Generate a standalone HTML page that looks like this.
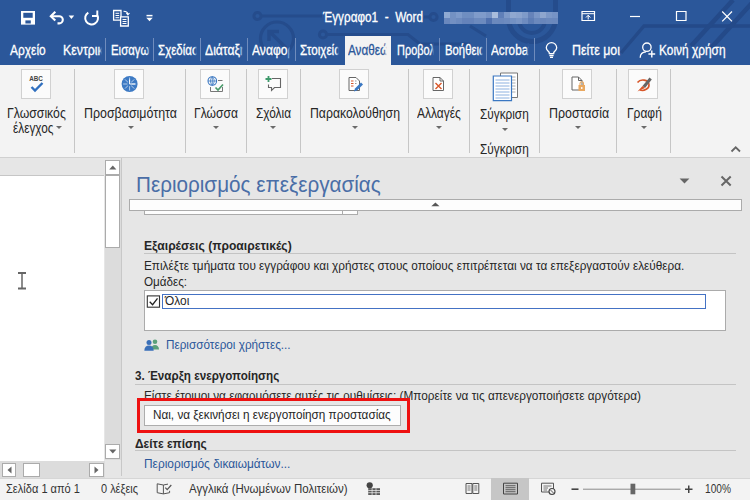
<!DOCTYPE html>
<html>
<head>
<meta charset="utf-8">
<style>
html,body{margin:0;padding:0;}
body{width:750px;height:500px;overflow:hidden;position:relative;background:#e6e6e6;font-family:"Liberation Sans",sans-serif;font-size:12.5px;color:#262626;}
.abs{position:absolute;}
.t{position:absolute;white-space:nowrap;line-height:1;transform-origin:0 0;display:inline-block;}
.clip{position:absolute;overflow:hidden;white-space:nowrap;line-height:1;}
.clip span{display:inline-block;transform-origin:0 0;white-space:nowrap;}
.tab{font-size:14.5px;color:#fff;top:42.7px;-webkit-text-stroke:.3px #fff;}
.ctab{top:42.7px;height:17px;font-size:14.5px;color:#fff;-webkit-text-stroke:.3px currentColor;}
.ctab:after{content:"";position:absolute;right:0;top:0;width:3px;height:100%;background:linear-gradient(to right,rgba(43,87,154,0),rgba(43,87,154,1));}
.tsep{position:absolute;top:38px;width:1px;height:23px;background:#6f8cbd;}
.rsep{position:absolute;top:69px;width:1px;height:84px;background:#c6c6c6;}
.rl{font-size:14px;color:#262626;top:105.600px;}
.ib{position:absolute;top:69px;width:30px;height:30px;background:#fbfbfb;border:1px solid #d1d1d1;box-sizing:border-box;}
.dd{position:absolute;width:0;height:0;border-left:3px solid transparent;border-right:3px solid transparent;border-top:3px solid #6a6a6a;}
.b{font-size:12.5px;color:#262626;}
.bb{font-size:12.5px;color:#262626;font-weight:bold;}
.lnk{font-size:12.5px;color:#2b579a;}
.hl{position:absolute;height:1px;background:#c4c4c4;}
.st{font-size:12px;color:#333;top:482.700px;}
.sbtn{position:absolute;background:#fff;border:1px solid #ababab;box-sizing:border-box;}
</style>
</head>
<body>
<!-- ===== title + tabs ===== -->
<div class="abs" style="left:0;top:0;width:750px;height:65px;background:#2b579a;"></div>
<svg class="abs" style="left:0;top:0;" width="750" height="65" viewBox="0 0 750 65" fill="none" stroke="#254c8c" stroke-width="3">
  <circle cx="257.5" cy="16" r="3.6"/>
  <path d="M261.5 16H322"/>
  <path d="M424 17H430"/>
  <circle cx="433.5" cy="17" r="3.6"/>
  <circle cx="277" cy="38.5" r="16.5" stroke-width="3.2"/>
  <path d="M286 48L270 32M269 41V31.5H279" stroke-width="3.4"/>
  <circle cx="323" cy="34.5" r="3.6"/>
  <path d="M327 34.5H408L420 44H470"/>
  <path d="M470 26L486 36"/>
  <path d="M508.5 0V18a23.5 23.5 0 0 0 47 0V0" stroke-width="5"/>
  <path d="M519 12V20a13 13 0 0 0 26 0V12" stroke-width="4"/>
  <path d="M750 26H644L621 53" stroke="#244a89" stroke-width="3.400"/>
  <path d="M733 0L691 46M752 3L710 49" stroke="#244a89" stroke-width="4.600"/>
</svg>
<!-- pixelated user name -->
<svg class="abs" style="left:0;top:0;" width="750" height="30" viewBox="0 0 750 30" shape-rendering="crispEdges"><rect x="443.70" y="11.9" width="6.07" height="6.1" fill="#8faad2"/><rect x="443.70" y="18" width="6.07" height="6" fill="#6a88bd"/><rect x="449.72" y="11.9" width="6.07" height="6.1" fill="#7391c3"/><rect x="449.72" y="18" width="6.07" height="6" fill="#7390c2"/><rect x="455.73" y="11.9" width="6.07" height="6.1" fill="#7d9aca"/><rect x="455.73" y="18" width="6.07" height="6" fill="#6d8bbf"/><rect x="461.75" y="11.9" width="6.07" height="6.1" fill="#6f8ec1"/><rect x="461.75" y="18" width="6.07" height="6" fill="#6583ba"/><rect x="467.76" y="11.9" width="6.07" height="6.1" fill="#6f8ec1"/><rect x="467.76" y="18" width="6.07" height="6" fill="#6583ba"/><rect x="473.78" y="11.9" width="6.07" height="6.1" fill="#7f9bca"/><rect x="473.78" y="18" width="6.07" height="6" fill="#6c8abe"/><rect x="479.79" y="11.9" width="6.07" height="6.1" fill="#7f9bca"/><rect x="479.79" y="18" width="6.07" height="6" fill="#6c8abe"/><rect x="485.81" y="11.9" width="6.07" height="6.1" fill="#7592c4"/><rect x="485.81" y="18" width="6.07" height="6" fill="#4f70ae"/><rect x="491.83" y="11.9" width="6.07" height="6.1" fill="#a9bddc"/><rect x="491.83" y="18" width="6.07" height="6" fill="#6b89bd"/><rect x="497.84" y="11.9" width="6.07" height="6.1" fill="#5f7fb8"/><rect x="497.84" y="18" width="6.07" height="6" fill="#6a88bd"/><rect x="503.86" y="11.9" width="6.07" height="6.1" fill="#7d99c8"/><rect x="503.86" y="18" width="6.07" height="6" fill="#6d8bbf"/><rect x="509.87" y="11.9" width="6.07" height="6.1" fill="#90a8d0"/><rect x="509.87" y="18" width="6.07" height="6" fill="#7391c3"/><rect x="515.89" y="11.9" width="6.07" height="6.1" fill="#8ba4ce"/><rect x="515.89" y="18" width="6.07" height="6" fill="#7a96c6"/><rect x="521.91" y="11.9" width="6.07" height="6.1" fill="#7f9bc9"/><rect x="521.91" y="18" width="6.07" height="6" fill="#6e8cc0"/><rect x="527.92" y="11.9" width="6.07" height="6.1" fill="#6683b9"/><rect x="527.92" y="18" width="6.07" height="6" fill="#5d7db5"/><rect x="533.94" y="11.9" width="6.07" height="6.1" fill="#7a96c6"/><rect x="533.94" y="18" width="6.07" height="6" fill="#6b89bd"/><rect x="539.95" y="11.9" width="6.07" height="6.1" fill="#8ea6ce"/><rect x="539.95" y="18" width="6.07" height="6" fill="#6886bb"/><rect x="545.97" y="11.9" width="6.07" height="6.1" fill="#7c98c7"/><rect x="545.97" y="18" width="6.07" height="6" fill="#6b89bd"/><rect x="551.98" y="11.9" width="6.07" height="6.1" fill="#7693c5"/><rect x="551.98" y="18" width="6.07" height="6" fill="#6a88bd"/></svg>

<!-- QAT icons -->
<svg class="abs" style="left:0;top:0;" width="170" height="36" viewBox="0 0 170 36" fill="none" stroke="#fff" stroke-width="1.6">
  <!-- save -->
  <path d="M21 11H35V24.600H21Z" fill="#fff" stroke="none"/>
  <path d="M23.300 12.800H32.700V17.800H23.300Z" fill="#2b579a" stroke="none"/>
  <path d="M25.400 20.400H30.800V23.500H25.400Z" fill="#2b579a" stroke="none"/>
  <!-- undo -->
  <path d="M55.300 11.800L50.800 16.200L55.300 20.600" stroke-width="2.100"/>
  <path d="M51.200 16.200H59.200a3.600 3.600 0 0 1 0 7.200H57.500" stroke-width="2.100"/>
  <path d="M68.600 15.500H74.200L71.400 18.900Z" fill="#fff" stroke="none"/>
  <!-- redo -->
  <path d="M88.300 12.600a6.400 6.400 0 1 0 8.600 1.900" stroke-width="2"/>
  <path d="M97.300 10.600V16H92" stroke-width="1.900"/>
  <!-- doc copy -->
  <path d="M113.600 10.500H121V20.200H113.600Z" stroke-width="1.300"/>
  <path d="M120.600 16.800H128.300V26H120.600Z" stroke-width="1.300" fill="#2b579a"/>
  <path d="M115.500 13.300H119.200M115.500 15.500H119.200M115.500 17.700H119.200M122.500 19.500H126.500M122.500 21.500H126.500M122.500 23.500H126.500" stroke-width="1"/>
  <path d="M123.500 11.300c2.800 0 4.300 1 4.300 3.200M126.300 13L127.900 14.800L129.500 13" stroke-width="1.100"/>
  <!-- customize -->
  <path d="M146.500 15.600H152.500" stroke-width="1.500"/>
  <path d="M146.300 17.800H152.700L149.500 21.200Z" fill="#fff" stroke="none"/>
</svg>
<div class="t" style="left:323.3px;top:9.8px;font-size:14px;color:#fff;-webkit-text-stroke:.3px #fff;transform:scaleX(0.8396)">Έγγραφο1&nbsp; -&nbsp; Word</div>

<!-- window controls -->
<svg class="abs" style="left:570px;top:0;" width="180" height="36" viewBox="570 0 180 36" fill="none" stroke="#fff" stroke-width="1.2">
  <path d="M582 11.500H594.5V20.500H582Z"/>
  <path d="M582 13.700H594.5" stroke-width="1"/>
  <path d="M588.2 19.5V15.5M586 17.5L588.2 15.2L590.4 17.5" stroke-width="1"/>
  <path d="M630 16.500H640"/>
  <path d="M676.500 11.500H686V20.500H676.500Z"/>
  <path d="M722.200 11.500L732 21.300M732 11.500L722.200 21.300"/>
</svg>

<!-- tabs -->
<div class="t tab" style="left:10px;transform:scaleX(0.8248)">Αρχείο</div>
<div class="clip ctab" style="left:63.4px;width:38.2px;"><span style="transform:scaleX(0.8523)">Κεντρική</span></div>
<div class="tsep" style="left:105px;"></div>
<div class="clip ctab" style="left:110.6px;width:39.2px;"><span style="transform:scaleX(0.7869)">Εισαγωγή</span></div>
<div class="tsep" style="left:153px;"></div>
<div class="clip ctab" style="left:158px;width:38.8px;"><span style="transform:scaleX(0.7959)">Σχεδίαση</span></div>
<div class="tsep" style="left:200px;"></div>
<div class="clip ctab" style="left:205px;width:38.2px;"><span style="transform:scaleX(0.8396)">Διάταξη</span></div>
<div class="tsep" style="left:247px;"></div>
<div class="clip ctab" style="left:252.3px;width:38.2px;"><span style="transform:scaleX(0.8350)">Αναφορές</span></div>
<div class="tsep" style="left:295px;"></div>
<div class="clip ctab" style="left:300px;width:39.2px;"><span style="transform:scaleX(0.8071)">Στοιχεία</span></div>
<div class="abs" style="left:344.500px;top:35.500px;width:46.500px;height:30px;background:#f3f3f3;"></div>
<div class="clip ctab" style="left:348.2px;width:39.2px;color:#2b579a;"><span style="transform:scaleX(0.8085)">Αναθεώρηση</span></div>
<div class="clip ctab" style="left:396.6px;width:37.6px;"><span style="transform:scaleX(0.7549)">Προβολή</span></div>
<div class="tsep" style="left:439px;"></div>
<div class="clip ctab" style="left:445px;width:38.2px;"><span style="transform:scaleX(0.7805)">Βοήθεια</span></div>
<div class="tsep" style="left:486px;"></div>
<div class="clip ctab" style="left:491.4px;width:37.6px;"><span style="transform:scaleX(0.8095)">Acrobat</span></div>
<div class="tsep" style="left:533.5px;"></div>
<svg class="abs" style="left:540px;top:38px;" width="24" height="24" viewBox="540 38 24 24" fill="none" stroke="#fff" stroke-width="1.300">
  <path d="M549.300 53.600V52.800c0-1.300-3-2.200-3-5a5.200 5.200 0 0 1 10.400 0c0 2.800-3 3.700-3 5V53.600Z"/>
  <path d="M549.400 55.500H553.600M550 57.400H553"/>
</svg>
<div class="t tab" style="left:571.800px;transform:scaleX(0.8567)">Πείτε μοι</div>
<svg class="abs" style="left:636px;top:38px;" width="24" height="24" viewBox="636 38 24 24" fill="none" stroke="#fff" stroke-width="1.300">
  <circle cx="646.900" cy="47.200" r="4.200"/>
  <path d="M640.200 57.800c0-3.400 2.300-5.700 5.800-5.900"/>
  <path d="M648.400 54H655.200M651.800 50.600V57.400" stroke-width="1.400"/>
</svg>
<div class="t tab" style="left:659.300px;transform:scaleX(0.8216)">Κοινή χρήση</div>
<style>.ctab[style*="2b579a"]:after{background:linear-gradient(to right,rgba(243,243,243,0),rgba(243,243,243,1));}</style>

<!-- ===== ribbon ===== -->
<div class="abs" style="left:0;top:65px;width:750px;height:92px;background:#f3f3f3;"></div>
<div class="abs" style="left:0;top:156.500px;width:750px;height:1.500px;background:#d0d0d0;"></div>
<div class="rsep" style="left:74px;"></div>
<div class="rsep" style="left:185.200px;"></div>
<div class="rsep" style="left:246.100px;"></div>
<div class="rsep" style="left:300.100px;"></div>
<div class="rsep" style="left:408px;"></div>
<div class="rsep" style="left:469px;"></div>
<div class="rsep" style="left:539px;"></div>
<div class="rsep" style="left:616px;"></div>
<div class="rsep" style="left:670px;"></div>

<!-- 1 spelling -->
<div class="ib" style="left:21px;"></div>
<svg class="abs" style="left:21px;top:69px;" width="30" height="30" viewBox="0 0 30 30" fill="none">
  <text x="15" y="11.800" font-family="Liberation Sans" font-weight="bold" font-size="6.300" text-anchor="middle" fill="#444">ABC</text>
  <path d="M10.500 18L14 21.500L21.500 14" stroke="#2f6fbf" stroke-width="2.400"/>
</svg>
<div class="t rl" style="left:7.300px;transform:scaleX(0.8752)">Γλωσσικός</div>
<div class="t rl" style="left:12.500px;top:120.800px;transform:scaleX(0.8438)">έλεγχος</div>
<div class="dd" style="left:55.800px;top:125.900px;"></div>

<!-- 2 accessibility -->
<div class="ib" style="left:114px;"></div>
<svg class="abs" style="left:114px;top:69px;" width="30" height="30" viewBox="0 0 30 30" fill="none">
  <circle cx="15.600" cy="15" r="8" fill="#3d7ac4"/>
  <path d="M15.600 8.500V21.500M9.100 15H22.100M11 10.400L20.200 19.600M20.200 10.400L11 19.600" stroke="#e8f0fa" stroke-width=".7"/>
  <circle cx="15.600" cy="15" r="2.300" fill="#3d7ac4"/>
  <path d="M15.600 15H21M15.600 15V10.500" stroke="#fff" stroke-width="1"/>
</svg>
<div class="t rl" style="left:83.600px;transform:scaleX(0.8874)">Προσβασιμότητα</div>
<div class="dd" style="left:127.800px;top:125.900px;"></div>

<!-- 3 language -->
<div class="ib" style="left:200px;"></div>
<svg class="abs" style="left:200px;top:69px;" width="30" height="30" viewBox="0 0 30 30" fill="none">
  <circle cx="12.300" cy="12" r="4.300" stroke="#3a77c2" stroke-width="1.100"/>
  <path d="M8 12H16.600M12.300 7.700V16.300M12.300 7.700c-2.500 2.500-2.500 6 0 8.600M12.300 7.700c2.500 2.500 2.500 6 0 8.600" stroke="#3a77c2" stroke-width=".8"/>
  <path d="M18 11.500H22.500" stroke="#777" stroke-width="1"/>
  <path d="M10.500 18V22.500H22.500V18" stroke="#777" stroke-width="1"/>
  <path d="M15.500 18.500L18 21L23 15.500" stroke="#4a9a6a" stroke-width="1.700"/>
</svg>
<div class="t rl" style="left:194.400px;transform:scaleX(0.8640)">Γλώσσα</div>
<div class="dd" style="left:213.200px;top:125.900px;"></div>

<!-- 4 comments -->
<div class="ib" style="left:258px;"></div>
<svg class="abs" style="left:258px;top:69px;" width="30" height="30" viewBox="0 0 30 30" fill="none">
  <path d="M14 9.500H22.500V18.500H16.500L13.500 21.500V18.500H10.500V15.500" stroke="#666" stroke-width="1.100"/>
  <path d="M10.500 7V13M7.500 10H13.500" stroke="#3f9a6c" stroke-width="1.800"/>
</svg>
<div class="t rl" style="left:256px;transform:scaleX(0.8462)">Σχόλια</div>
<div class="dd" style="left:270.200px;top:125.900px;"></div>

<!-- 5 tracking -->
<div class="ib" style="left:339px;"></div>
<svg class="abs" style="left:339px;top:69px;" width="30" height="30" viewBox="0 0 30 30" fill="none">
  <path d="M10 8.500H17L20.500 12V21.500H10Z" stroke="#666" stroke-width="1" fill="#fff"/>
  <path d="M12 12H14.500M12 14.500H14.500M12 17H14.500" stroke="#d8572a" stroke-width="1.100"/>
  <path d="M16 12H17.500M16 14.500H17.500" stroke="#999" stroke-width="1"/>
  <path d="M15 22.500L16 19.500L22 13.500L24 15.500L18 21.500Z" fill="#3a77c2"/>
</svg>
<div class="t rl" style="left:309.700px;transform:scaleX(0.8751)">Παρακολούθηση</div>
<div class="dd" style="left:351.600px;top:125.900px;"></div>

<!-- 6 changes -->
<div class="ib" style="left:423px;"></div>
<svg class="abs" style="left:423px;top:69px;" width="30" height="30" viewBox="0 0 30 30" fill="none">
  <path d="M10 8.500H17L20.500 12V21.500H10Z" stroke="#666" stroke-width="1" fill="#fff"/>
  <path d="M17 8.500V12H20.500" stroke="#666" stroke-width="1"/>
  <path d="M12.500 14L18.500 20M18.500 14L12.500 20" stroke="#d8572a" stroke-width="1.400"/>
</svg>
<div class="t rl" style="left:417.400px;transform:scaleX(0.8552)">Αλλαγές</div>
<div class="dd" style="left:436.400px;top:125.900px;"></div>

<!-- 7 compare -->
<svg class="abs" style="left:490px;top:70px;" width="32" height="34" viewBox="490 70 32 34" fill="none">
  <path d="M500.500 73H517.500V97.500H500.500Z" fill="#fff" stroke="#777" stroke-width="1"/>
  <path d="M503 77H515.500M503 80H515.500M503 83H515.500M503 86H515.500M503 89H515.500M503 92H515.500" stroke="#999" stroke-width=".8"/>
  <path d="M493.300 76H511.500V100.700H493.300Z" fill="#fff" stroke="#3a77c2" stroke-width="1.200"/>
  <path d="M495.500 80H509.500M495.500 83H509.500M495.500 86H509.500M495.500 89H509.500M495.500 92H509.500M495.500 95H509.500M495.500 98H509.500" stroke="#7fa8dc" stroke-width=".9"/>
</svg>
<div class="t rl" style="left:480.100px;top:106.900px;transform:scaleX(0.8424)">Σύγκριση</div>
<div class="dd" style="left:501.700px;top:127.900px;"></div>
<div class="t rl" style="left:480.100px;top:141.700px;transform:scaleX(0.8424)">Σύγκριση</div>

<!-- 8 protect -->
<div class="ib" style="left:561.800px;"></div>
<svg class="abs" style="left:561.800px;top:69px;" width="30" height="30" viewBox="0 0 30 30" fill="none">
  <path d="M10 8H16.500L20 11.500V21H10Z" stroke="#666" stroke-width="1" fill="#fff"/>
  <path d="M16.500 8V11.500H20" stroke="#666" stroke-width="1"/>
  <rect x="16.500" y="16" width="6.500" height="6" fill="#e9a860"/>
  <path d="M18 16V14.500a1.750 1.750 0 0 1 3.500 0V16" stroke="#e9a860" stroke-width="1.100"/>
  <circle cx="19.750" cy="19" r=".9" fill="#fff"/>
</svg>
<div class="t rl" style="left:548.500px;transform:scaleX(0.8867)">Προστασία</div>
<div class="dd" style="left:575.400px;top:125.900px;"></div>

<!-- 9 ink -->
<div class="ib" style="left:628px;"></div>
<svg class="abs" style="left:628px;top:69px;" width="30" height="30" viewBox="0 0 30 30" fill="none">
  <path d="M9.500 13.500c3-4 11-3 11.500 2c.5 4-5 7-9 5.500" stroke="#d8572a" stroke-width="1.600"/>
  <path d="M14.500 17L21.500 8.500L23.800 10.500L17 19Z" fill="#666"/>
  <path d="M14.500 17L17 19L9.500 22.500Z" fill="#d8572a"/>
</svg>
<div class="t rl" style="left:626.600px;transform:scaleX(0.8563)">Γραφή</div>
<div class="dd" style="left:640.700px;top:125.900px;"></div>

<svg class="abs" style="left:729px;top:144px;" width="14" height="10" viewBox="0 0 14 10" fill="none"><path d="M2.500 7.500L6.700 3.300L11 7.500" stroke="#666" stroke-width="1.800"/></svg>


<!-- ===== doc area ===== -->
<!-- document page -->
<div class="abs" style="left:0;top:175px;width:104px;height:286px;background:#fff;border-top:1px solid #c6c6c6;box-sizing:border-box;"></div>
<!-- I-beam -->
<svg class="abs" style="left:16px;top:270px;" width="12" height="22" viewBox="16 270 12 22"><path d="M18 273H26M18 288.500H26" stroke="#666" stroke-width="2"/><path d="M22 273V288.500" stroke="#666" stroke-width="1.500"/></svg>
<!-- v scrollbar -->
<div class="abs" style="left:104.500px;top:160px;width:16px;height:299.500px;background:#dcdcdc;"></div>
<div class="sbtn" style="left:104.500px;top:160px;width:15.500px;height:15px;"></div>
<svg class="abs" style="left:104.500px;top:160px;" width="16" height="15" viewBox="0 0 16 15"><path d="M4.200 9.500H11.400L7.800 5.500Z" fill="#666"/></svg>
<div class="sbtn" style="left:104.500px;top:175.300px;width:15.500px;height:73px;"></div>
<div class="sbtn" style="left:104.500px;top:444.300px;width:15.500px;height:14.500px;"></div>
<svg class="abs" style="left:104.500px;top:444.300px;" width="16" height="15" viewBox="0 0 16 15"><path d="M4.200 5.500H11.400L7.800 9.500Z" fill="#666"/></svg>
<!-- h scrollbar -->
<div class="abs" style="left:0;top:461px;width:104.500px;height:16.500px;background:#dcdcdc;"></div>
<div class="sbtn" style="left:1.500px;top:462.500px;width:14.500px;height:14px;"></div>
<svg class="abs" style="left:1.500px;top:462.500px;" width="15" height="14" viewBox="0 0 15 14"><path d="M9.500 3.500V10.500L5.500 7Z" fill="#666"/></svg>
<div class="sbtn" style="left:23.300px;top:462.500px;width:16.300px;height:14px;"></div>
<div class="sbtn" style="left:89.300px;top:462.500px;width:14.500px;height:14px;"></div>
<svg class="abs" style="left:89.300px;top:462.500px;" width="15" height="14" viewBox="0 0 15 14"><path d="M5.500 3.500V10.500L9.500 7Z" fill="#666"/></svg>
<!-- pane divider -->
<div class="abs" style="left:121.300px;top:158px;width:1px;height:318px;background:#c8c8c8;"></div>


<!-- ===== pane ===== -->
<div class="t" style="left:136.200px;top:174px;font-size:22.500px;color:#4a6ea7;transform:scaleX(0.9191)">Περιορισμός επεξεργασίας</div>
<svg class="abs" style="left:676px;top:174px;" width="60" height="14" viewBox="676 174 60 14" fill="none">
  <path d="M679.600 178.500H689.400L684.500 183.500Z" fill="#666"/>
  <path d="M721.500 176.500L730.700 185.500M730.700 176.500L721.500 185.500" stroke="#666" stroke-width="2"/>
</svg>
<!-- inner remnants -->
<div class="abs" style="left:144.300px;top:206px;width:213.500px;height:8.500px;background:#fdfdfd;border:1px solid #ababab;box-sizing:border-box;"></div>
<div class="abs" style="left:342px;top:206px;width:1px;height:8.500px;background:#ababab;"></div>
<!-- scroll-up bar -->
<div class="abs" style="left:129.300px;top:199.300px;width:612.500px;height:11.500px;background:#fdfdfd;border:1px solid #ababab;box-sizing:border-box;"></div>
<svg class="abs" style="left:430px;top:200px;" width="12" height="10" viewBox="430 200 12 10"><path d="M431.300 206.300H439.500L435.400 202.500Z" fill="#555"/></svg>

<div class="t bb" style="left:144.300px;top:239.900px;transform:scaleX(0.9687)">Εξαιρέσεις (προαιρετικές)</div>
<div class="hl" style="left:144.300px;top:253px;width:591.700px;"></div>
<div class="t b" style="left:144.300px;top:260.200px;transform:scaleX(0.9425)">Επιλέξτε τμήματα του εγγράφου και χρήστες στους οποίους επιτρέπεται να τα επεξεργαστούν ελεύθερα.</div>
<div class="t b" style="left:144.300px;top:275.800px;transform:scaleX(0.9332)">Ομάδες:</div>
<div class="abs" style="left:144.300px;top:290.300px;width:581.500px;height:41.200px;background:#fff;border:1px solid #ababab;box-sizing:border-box;"></div>
<div class="abs" style="left:162.300px;top:293.500px;width:543.700px;height:15.800px;background:#fff;border:1px solid #4472c4;box-sizing:border-box;"></div>
<svg class="abs" style="left:146px;top:295px;" width="15" height="14" viewBox="146 295 15 14" fill="none">
  <rect x="147.300" y="295.900" width="12.200" height="11.300" stroke="#333" stroke-width="1.100" fill="#fff"/>
  <path d="M149.700 301.700L152.600 304.700L157.500 298.300" stroke="#222" stroke-width="1.300"/>
</svg>
<div class="t b" style="left:164.800px;top:294.900px;transform:scaleX(0.9535)">Όλοι</div>
<svg class="abs" style="left:143px;top:338px;" width="18" height="14" viewBox="143 338 18 14" fill="none">
  <circle cx="155" cy="341.700" r="2.300" fill="#5aa07a"/>
  <path d="M151 349.500c0-3 1.800-4.500 4-4.500s4 1.500 4 4.500Z" fill="#5aa07a"/>
  <circle cx="149" cy="342.500" r="2.500" fill="#3a6fb8"/>
  <path d="M144.300 350.800c0-3.400 2-5.200 4.700-5.200s4.700 1.800 4.700 5.200Z" fill="#3a6fb8"/>
</svg>
<div class="t lnk" style="left:166px;top:339.200px;transform:scaleX(0.9382)">Περισσότεροι χρήστες...</div>

<div class="t bb" style="left:134.800px;top:370.300px;transform:scaleX(0.9299)">3. Έναρξη ενεργοποίησης</div>
<div class="hl" style="left:134.800px;top:383.800px;width:601.200px;"></div>
<div class="t b" style="left:144.300px;top:390.200px;transform:scaleX(0.9436)">Είστε έτοιμοι να εφαρμόσετε αυτές τις ρυθμίσεις; (Μπορείτε να τις απενεργοποιήσετε αργότερα)</div>
<!-- red highlight (covers part of text line) -->
<div class="abs" style="left:137px;top:397.700px;width:273px;height:35.300px;background:#e6e6e6;border:3px solid #ee1111;box-sizing:border-box;"></div>
<div class="abs" style="left:144.300px;top:405px;width:256.400px;height:21.300px;background:#fdfdfd;border:1px solid #adadad;box-sizing:border-box;"></div>
<div class="t b" style="left:153.100px;top:409.200px;transform:scaleX(0.9387)">Ναι, να ξεκινήσει η ενεργοποίηση προστασίας</div>
<div class="t bb" style="left:134.800px;top:437.500px;transform:scaleX(0.9554)">Δείτε επίσης</div>
<div class="hl" style="left:134.800px;top:450.400px;width:601.200px;"></div>
<div class="t lnk" style="left:144.300px;top:458.300px;transform:scaleX(0.9512)">Περιορισμός δικαιωμάτων...</div>


<!-- ===== status ===== -->
<div class="abs" style="left:0;top:477.500px;width:750px;height:22.500px;background:#f3f3f3;border-top:1px solid #d6d6d6;box-sizing:border-box;"></div>
<div class="abs" style="left:491.300px;top:477.500px;width:37.400px;height:22.500px;background:#c6c6c6;"></div>
<div class="t st" style="left:6px;transform:scaleX(0.9216)">Σελίδα 1 από 1</div>
<div class="t st" style="left:101.400px;transform:scaleX(0.9129)">0 λέξεις</div>
<div class="t st" style="left:189px;transform:scaleX(0.9578)">Αγγλικά (Ηνωμένων Πολιτειών)</div>
<div class="t st" style="left:704.700px;transform:scaleX(0.8468)">100%</div>
<svg class="abs" style="left:150px;top:478px;" width="600" height="22" viewBox="150 478 600 22" fill="none" stroke="#555" stroke-width="1">
  <!-- proofing book -->
  <path d="M157.200 483.800L163.400 485V493.900L157.200 492.700ZM163.400 485L168 484.100M163.400 493.900L169.600 492.700V490.800" stroke-width="1"/>
  <path d="M165.300 487.600L167.200 489.700L171.300 485" stroke-width="1.200"/>
  <!-- macro -->
  <circle cx="369.700" cy="485.300" r="3.100" fill="#444" stroke="none"/>
  <path d="M368.200 488.200H380V495H368.200Z" fill="#5a5a5a" stroke="none"/>
  <path d="M368.200 490.500H380M368.200 492.700H380M372.100 488.200V495M376 488.200V495" stroke="#f3f3f3" stroke-width=".7"/>
  <!-- read mode -->
  <path d="M466 483.500H472V493.500H466ZM472.800 483.500H478.800V493.500H472.800Z"/>
  <path d="M467.500 486H470.500M467.500 488H470.500M467.500 490H470.500M474.300 486H477.300M474.300 488H477.300M474.300 490H477.300" stroke-width=".8"/>
  <!-- print layout -->
  <path d="M503.500 483.200H517.500V494H503.500Z" stroke="#444"/>
  <path d="M505.500 485.700H515.500M505.500 487.700H515.500M505.500 489.700H515.500M505.500 491.700H515.500" stroke="#555" stroke-width=".9"/>
  <!-- web layout -->
  <path d="M541.500 483.200H553.500V492H541.500Z"/>
  <path d="M543.500 486H551.500M543.500 488H548M543.500 490H547" stroke-width=".8"/>
  <circle cx="552" cy="491.500" r="3" fill="#f3f3f3" stroke="#444" stroke-width="1.100"/>
  <path d="M550 489.500L554 493.500" stroke="#444" stroke-width=".9"/>
  <!-- zoom -->
  <path d="M571.500 489.200H578.500" stroke="#444" stroke-width="1.600"/>
  <path d="M583 489.200H680.500" stroke="#8a8a8a" stroke-width="1"/>
  <path d="M630.500 483.700H635.300V494.300H630.500Z" fill="#666" stroke="none"/>
  <path d="M685 489.200H692.500M688.750 485.500V493" stroke="#444" stroke-width="1.500"/>
</svg>

</body>
</html>
